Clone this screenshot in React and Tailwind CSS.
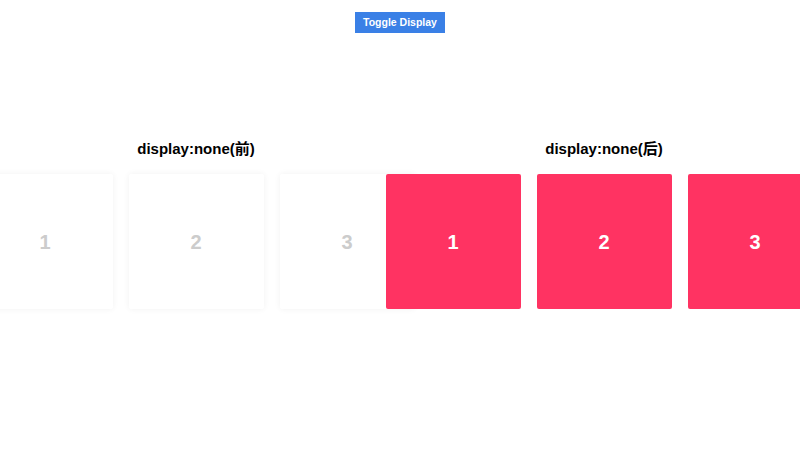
const items = [1, 2, 3]

function Group({ title, active }) {
  return (
    <div className="flex w-[392px] flex-col items-center">
      <h3 className="mb-[15px] text-[15px] font-bold leading-[20px] text-black">{title}</h3>
      <div className="flex justify-center">
        {items.map(n => (
          <div
            key={n}
            className={
              active
                ? 'mx-2 flex h-[135px] w-[135px] shrink-0 items-center justify-center rounded-[2px] bg-[#ff3362] text-[20px] font-bold text-white'
                : 'mx-2 flex h-[135px] w-[135px] shrink-0 items-center justify-center rounded-[2px] bg-white text-[20px] font-bold text-[#cccccc] shadow-[0_0_6px_rgba(0,0,0,0.06)]'
            }
          >
            {n}
          </div>
        ))}
      </div>
    </div>
  )
}

export default function App() {
  return (
    <div
      className="flex h-screen w-full flex-col overflow-hidden bg-white"
      style={{ fontFamily: '"Liberation Sans", "Noto Sans CJK SC", Arial, sans-serif' }}
    >
      <div className="flex h-[33px] shrink-0 items-end justify-center">
        <button
          type="button"
          className="h-[21px] w-[90px] bg-[#3a80e6] text-[10.5px] font-bold text-white"
        >
          Toggle Display
        </button>
      </div>
      <div className="flex flex-1 items-center justify-center gap-4 pb-[35px]">
        <Group title="display:none(前)" />
        <Group title="display:none(后)" active />
      </div>
    </div>
  )
}
